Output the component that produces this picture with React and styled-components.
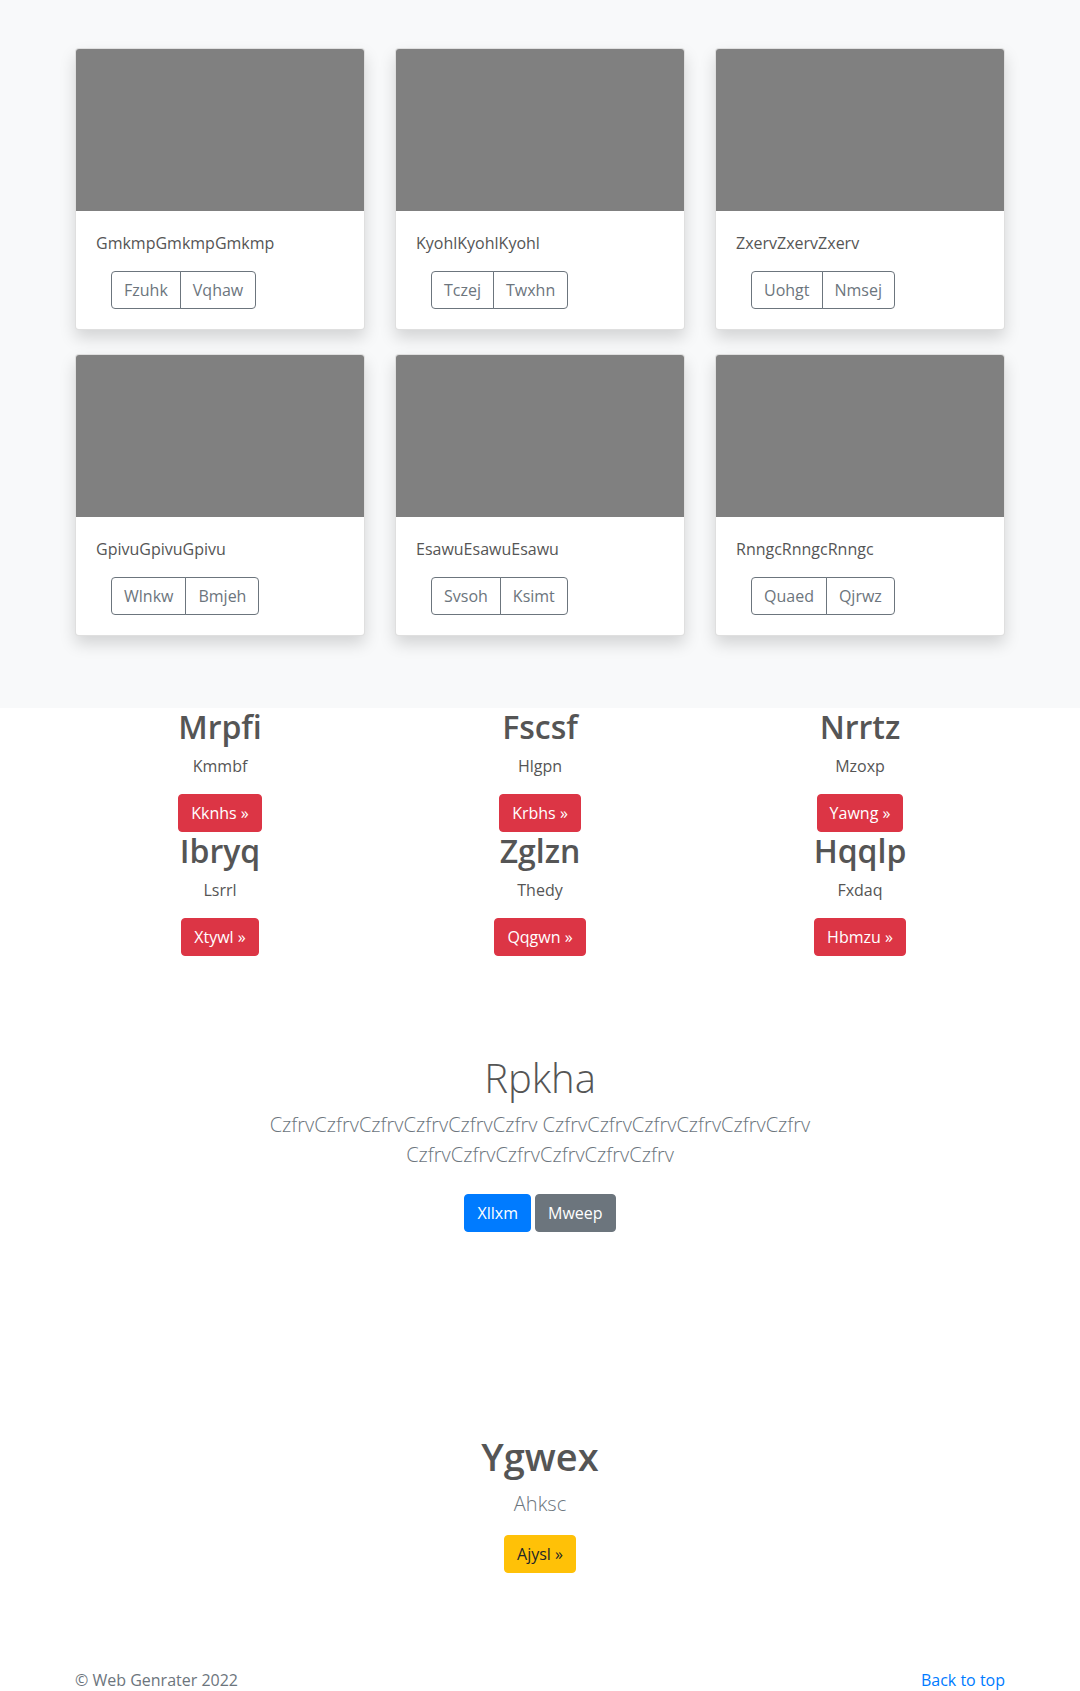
import React from 'react'
import styled, { createGlobalStyle } from 'styled-components'

const GlobalStyle = createGlobalStyle`
  body {
    margin: 0;
    font-family: "Segoe UI", "Open Sans", "Noto Sans", Arial, sans-serif;
    font-size: 16px;
    line-height: 24px;
    color: #555;
    background: #fff;
  }
  * { box-sizing: border-box; }
`

const Album = styled.section`
  background: #f8f9fa;
  padding: 48px 0 72px;
`

const CardGrid = styled.div`
  width: 930px;
  margin: 0 auto;
  display: grid;
  grid-template-columns: repeat(3, 1fr);
  column-gap: 30px;
  row-gap: 24px;
`

const Card = styled.div`
  background: #fff;
  border: 1px solid rgba(0, 0, 0, 0.125);
  border-radius: 4px;
  box-shadow: 0 8px 16px rgba(0, 0, 0, 0.15);
  overflow: hidden;
`

const Thumb = styled.div`
  height: 162px;
  background: #808080;
`

const CardBody = styled.div`
  padding: 20px;
`

const CardText = styled.p`
  margin: 0 0 16px;
`

const BtnGroup = styled.div`
  display: inline-flex;
  margin-left: 15px;
`

const OutlineBtn = styled.button`
  font: inherit;
  line-height: 24px;
  padding: 6px 12px;
  color: #6c757d;
  background: transparent;
  border: 1px solid #6c757d;
  border-radius: ${(p) => (p.$first ? '4px 0 0 4px' : '0 4px 4px 0')};
  margin-left: ${(p) => (p.$first ? '0' : '-1px')};
  cursor: pointer;
`

const Features = styled.section`
  width: 960px;
  margin: 0 auto;
  display: grid;
  grid-template-columns: repeat(3, 1fr);
`

const Feature = styled.div`
  padding: 0 15px;
  text-align: center;
`

const FeatureTitle = styled.h2`
  font-size: 32px;
  font-weight: 600;
  line-height: 38px;
  margin: 0 0 8px;
  color: #555;
`

const FeatureText = styled.p`
  margin: 0 0 16px;
`

const Btn = styled.a`
  display: inline-block;
  font-size: 16px;
  line-height: 24px;
  padding: 6px 12px;
  border: 1px solid ${(p) => p.$bg};
  border-radius: 4px;
  background: ${(p) => p.$bg};
  color: ${(p) => p.$fg || '#fff'};
  text-decoration: none;
  cursor: pointer;
`

const Jumbotron = styled.section`
  padding: 98px 0 48px;
  text-align: center;
`

const JumboInner = styled.div`
  max-width: 640px;
  margin: 0 auto;
  padding: 0 15px;
`

const JumboTitle = styled.h1`
  font-size: 40px;
  font-weight: 300;
  line-height: 48px;
  margin: 0 0 8px;
  color: #555;
`

const Lead = styled.p`
  font-size: 20px;
  font-weight: 300;
  line-height: 30px;
  color: #6c757d;
  margin: 0 0 16px;
`

const ActionRow = styled.div`
  display: flex;
  justify-content: center;
  gap: 4px;
  padding: 8px 0;
`

const Promo = styled.section`
  padding: 145px 0 47px;
  text-align: center;
`

const PromoTitle = styled.h2`
  font-size: 38px;
  font-weight: 600;
  line-height: 46px;
  margin: 0 0 10px;
  color: #555;
`

const Footer = styled.footer`
  width: 930px;
  margin: 0 auto;
  padding-top: 48px;
  display: flex;
  justify-content: space-between;
  color: #6c757d;
`

const FooterText = styled.p`
  margin: 0;
`

const TopLink = styled.a`
  color: #007bff;
  text-decoration: none;
`

const cards = [
  ['GmkmpGmkmpGmkmp', 'Fzuhk', 'Vqhaw'],
  ['KyohlKyohlKyohl', 'Tczej', 'Twxhn'],
  ['ZxervZxervZxerv', 'Uohgt', 'Nmsej'],
  ['GpivuGpivuGpivu', 'Wlnkw', 'Bmjeh'],
  ['EsawuEsawuEsawu', 'Svsoh', 'Ksimt'],
  ['RnngcRnngcRnngc', 'Quaed', 'Qjrwz'],
]

const features = [
  ['Mrpfi', 'Kmmbf', 'Kknhs'],
  ['Fscsf', 'Hlgpn', 'Krbhs'],
  ['Nrrtz', 'Mzoxp', 'Yawng'],
  ['Ibryq', 'Lsrrl', 'Xtywl'],
  ['Zglzn', 'Thedy', 'Qqgwn'],
  ['Hqqlp', 'Fxdaq', 'Hbmzu'],
]

const App = () => {
  const czfrv = 'Czfrv'.repeat(6)
  return (
    <>
      <GlobalStyle />
      <Album>
        <CardGrid>
          {cards.map(([text, a, b]) => (
            <Card key={text}>
              <Thumb />
              <CardBody>
                <CardText>{text}</CardText>
                <BtnGroup>
                  <OutlineBtn $first>{a}</OutlineBtn>
                  <OutlineBtn>{b}</OutlineBtn>
                </BtnGroup>
              </CardBody>
            </Card>
          ))}
        </CardGrid>
      </Album>

      <Features>
        {features.map(([title, text, btn]) => (
          <Feature key={title}>
            <FeatureTitle>{title}</FeatureTitle>
            <FeatureText>{text}</FeatureText>
            <Btn $bg="#dc3545">{btn} »</Btn>
          </Feature>
        ))}
      </Features>

      <Jumbotron>
        <JumboInner>
          <JumboTitle>Rpkha</JumboTitle>
          <Lead>{`${czfrv} ${czfrv} ${czfrv}`}</Lead>
          <ActionRow>
            <Btn $bg="#007bff">Xllxm</Btn>
            <Btn $bg="#6c757d">Mweep</Btn>
          </ActionRow>
        </JumboInner>
      </Jumbotron>

      <Promo>
        <PromoTitle>Ygwex</PromoTitle>
        <Lead>Ahksc</Lead>
        <Btn $bg="#ffc107" $fg="#212529">Ajysl »</Btn>
      </Promo>

      <Footer>
        <FooterText>© Web Genrater 2022</FooterText>
        <TopLink href="#">Back to top</TopLink>
      </Footer>
    </>
  )
}

export default App
